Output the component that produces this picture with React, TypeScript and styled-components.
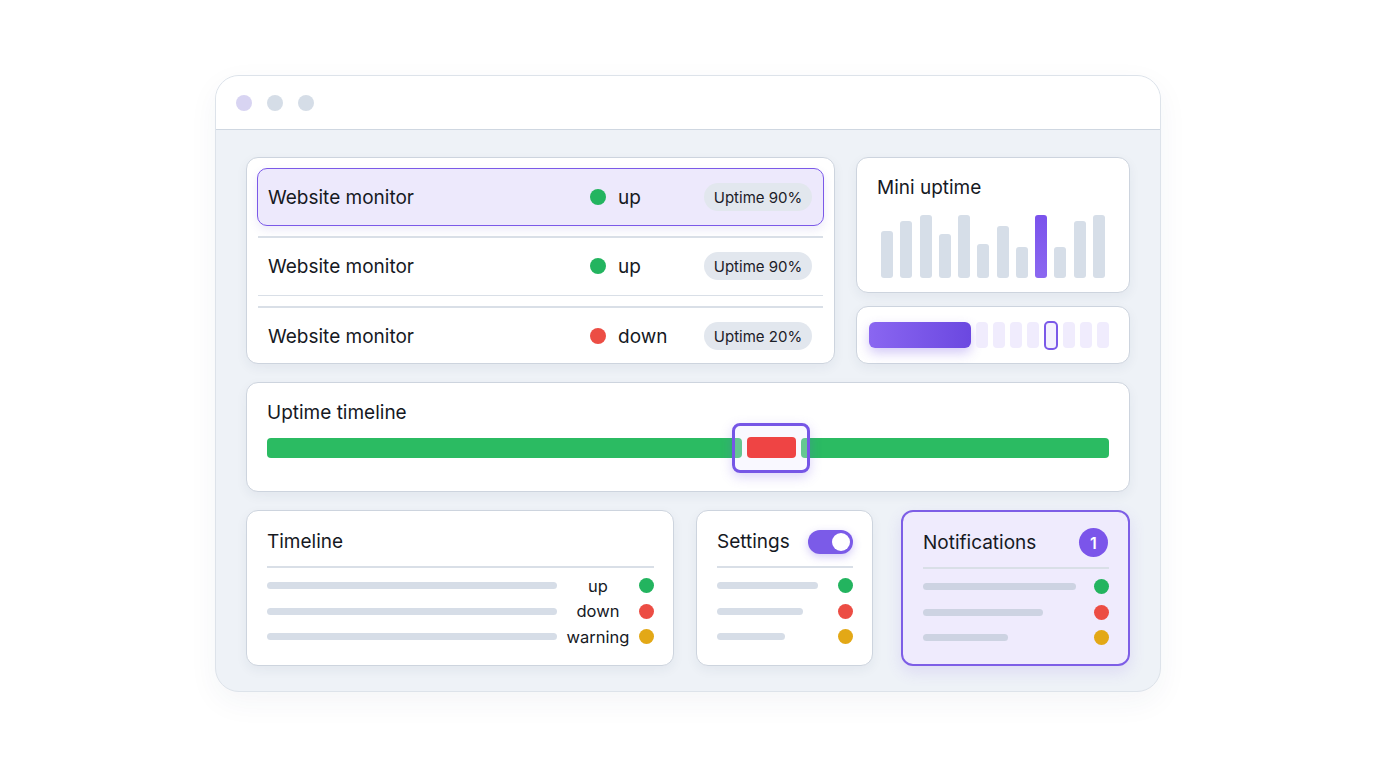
import styled, { createGlobalStyle } from "styled-components";

const GlobalStyle = createGlobalStyle`
    html, body {
        margin: 0;
        padding: 0;
        background: #ffffff;
    }
    body {
        font-family: 'Inter', 'Noto Sans', sans-serif;
        color: #16191f;
    }
`

const purple = '#7b59e8';
const dotColors = {
    up: '#23b45f',
    down: '#ec4d44',
    warning: '#e3a816',
};

type Status = keyof typeof dotColors;

const monitors: { status: Status; label: string; uptime: number; active?: boolean }[] = [
    { status: 'up', label: 'up', uptime: 90, active: true },
    { status: 'up', label: 'up', uptime: 90 },
    { status: 'down', label: 'down', uptime: 20 },
];

const bars = [47, 57, 63, 44, 63, 34, 52, 31, 63, 31, 57, 63];

export default function App() {
    return (
        <>
            <GlobalStyle />
            <Page>
                <Window>
                    <TitleBar>
                        <WinDot $color="#d8d4f2" />
                        <WinDot $color="#d5dde7" />
                        <WinDot $color="#d5dde7" />
                    </TitleBar>
                    <Body>
                        <TopRow>
                            <MonitorCard>
                                {monitors.map((m, i) => (
                                    <div key={i}>
                                        {i === 1 && <Divider $gap={10} />}
                                        {i === 2 && <><Divider /><Divider $gap={10} /></>}
                                        <MonitorRow $active={m.active}>
                                            <MonitorName>Website monitor</MonitorName>
                                            <StatusCell>
                                                <Dot $status={m.status} $size={16} />
                                                {m.label}
                                            </StatusCell>
                                            <Pill>Uptime {m.uptime}%</Pill>
                                        </MonitorRow>
                                    </div>
                                ))}
                            </MonitorCard>
                            <SideColumn>
                                <MiniCard>
                                    <Title>Mini uptime</Title>
                                    <Bars>
                                        {bars.map((h, i) => (
                                            <Bar key={i} $active={i === 8} style={{ height: h }} />
                                        ))}
                                    </Bars>
                                </MiniCard>
                                <SliderCard>
                                    <SliderFill />
                                    <Cell /><Cell /><Cell /><Cell />
                                    <Thumb />
                                    <Cell /><Cell /><Cell />
                                </SliderCard>
                            </SideColumn>
                        </TopRow>

                        <TimelineCard>
                            <Title>Uptime timeline</Title>
                            <Track>
                                <Segment $color="#2bbb62" style={{ width: 475 }} />
                                <Segment $color="#ef4444" $top style={{ width: 49 }} />
                                <Segment $color="#2bbb62" $grow />
                                <Selection />
                            </Track>
                        </TimelineCard>

                        <BottomRow>
                            <SmallCard>
                                <CardHead>
                                    <Title>Timeline</Title>
                                </CardHead>
                                <HeadDivider />
                                <LegendList>
                                    {(['up', 'down', 'warning'] as Status[]).map(s => (
                                        <LegendRow key={s}>
                                            <Line />
                                            <LegendLabel>{s}</LegendLabel>
                                            <Dot $status={s} $size={15} />
                                        </LegendRow>
                                    ))}
                                </LegendList>
                            </SmallCard>

                            <SmallCard>
                                <CardHead>
                                    <Title>Settings</Title>
                                    <Toggle><Knob /></Toggle>
                                </CardHead>
                                <HeadDivider />
                                <LegendList>
                                    {([['up', 101], ['down', 86], ['warning', 68]] as [Status, number][]).map(([s, w]) => (
                                        <LegendRow key={s} $compact>
                                            <Line style={{ width: w }} />
                                            <Dot $status={s} $size={15} />
                                        </LegendRow>
                                    ))}
                                </LegendList>
                            </SmallCard>

                            <SmallCard $highlight>
                                <CardHead>
                                    <Title>Notifications</Title>
                                    <Badge>1</Badge>
                                </CardHead>
                                <HeadDivider />
                                <LegendList>
                                    {([['up', 153], ['down', 120], ['warning', 85]] as [Status, number][]).map(([s, w]) => (
                                        <LegendRow key={s} $compact>
                                            <Line $dark style={{ width: w }} />
                                            <Dot $status={s} $size={15} />
                                        </LegendRow>
                                    ))}
                                </LegendList>
                            </SmallCard>
                        </BottomRow>
                    </Body>
                </Window>
            </Page>
        </>
    )
}

const Page = styled.div`
    width: 1376px;
    height: 768px;
    padding: 75px 0 0 215px;
    box-sizing: border-box;
`

const Window = styled.div`
    width: 946px;
    height: 617px;
    box-sizing: border-box;
    border: 1px solid #dde3ea;
    border-radius: 24px;
    overflow: hidden;
    background: #eef2f7;
    box-shadow: 0 10px 30px rgba(40, 55, 90, 0.05);
    display: flex;
    flex-direction: column;
`

const TitleBar = styled.div`
    height: 53px;
    flex-shrink: 0;
    background: #ffffff;
    border-bottom: 1.5px solid #cfd7e1;
    display: flex;
    align-items: center;
    gap: 15px;
    padding-left: 20px;
`

const WinDot = styled.span<{ $color: string }>`
    width: 16px;
    height: 16px;
    border-radius: 50%;
    background: ${p => p.$color};
`

const Body = styled.div`
    padding: 27px 30px 0 30px;
    display: flex;
    flex-direction: column;
`

const Card = styled.div`
    box-sizing: border-box;
    background: #ffffff;
    border: 1.5px solid #cdd4de;
    border-radius: 12px;
    box-shadow: 0 4px 12px rgba(30, 45, 80, 0.06);
`

const TopRow = styled.div`
    display: grid;
    grid-template-columns: 589px 274px;
    gap: 21px;
`

const MonitorCard = styled(Card)`
    height: 207px;
    padding: 10px 10px 0 10px;
`

const MonitorRow = styled.div<{ $active?: boolean }>`
    height: ${p => p.$active ? 58 : 57}px;
    box-sizing: border-box;
    display: grid;
    grid-template-columns: 1fr 114px 108px;
    align-items: center;
    padding: 0 11px 0 10px;
    border-radius: 10px;
    border: 1.5px solid ${p => p.$active ? purple : 'transparent'};
    background: ${p => p.$active ? '#ede9fc' : 'transparent'};
    box-shadow: ${p => p.$active ? '0 4px 10px rgba(100, 80, 200, 0.12)' : 'none'};
`

const MonitorName = styled.span`
    font-size: 19px;
`

const StatusCell = styled.span`
    display: flex;
    align-items: center;
    gap: 12px;
    font-size: 19px;
`

const Pill = styled.span`
    height: 28px;
    border-radius: 14px;
    background: #e2e7ee;
    display: flex;
    align-items: center;
    justify-content: center;
    font-size: 15px;
    color: #1c2028;
`

const Divider = styled.div<{ $gap?: number }>`
    height: 1.5px;
    background: #d9dfe7;
    margin: ${p => p.$gap ?? 0}px 1px 0 1px;
`

const Dot = styled.span<{ $status: Status; $size: number }>`
    width: ${p => p.$size}px;
    height: ${p => p.$size}px;
    border-radius: 50%;
    flex-shrink: 0;
    background: ${p => dotColors[p.$status]};
`

const SideColumn = styled.div`
    display: flex;
    flex-direction: column;
    gap: 13px;
`

const Title = styled.div`
    font-size: 19px;
    line-height: 22px;
`

const MiniCard = styled(Card)`
    height: 136px;
    padding: 19px 24px 14px 20px;
    display: flex;
    flex-direction: column;
    justify-content: space-between;
`

const Bars = styled.div`
    display: flex;
    align-items: flex-end;
    justify-content: space-between;
    height: 63px;
    padding-left: 4px;
`

const Bar = styled.span<{ $active?: boolean }>`
    width: 12px;
    border-radius: 3px;
    background: ${p => p.$active ? 'linear-gradient(180deg, #7a52ec, #8b68f0)' : '#d6dee8'};
`

const SliderCard = styled(Card)`
    height: 58px;
    padding: 0 12px;
    display: flex;
    align-items: center;
    gap: 5px;
`

const SliderFill = styled.span`
    width: 102px;
    height: 26px;
    border-radius: 6px;
    background: linear-gradient(90deg, #8a66f1, #6b48e0);
    box-shadow: 0 5px 12px rgba(110, 75, 230, 0.3);
`

const Cell = styled.span`
    width: 12px;
    height: 26px;
    border-radius: 4px;
    background: #f0ecfd;
`

const Thumb = styled.span`
    width: 14px;
    height: 29px;
    box-sizing: border-box;
    border: 2px solid ${purple};
    border-radius: 5px;
    background: #f4f1fe;
`

const TimelineCard = styled(Card)`
    margin-top: 18px;
    height: 110px;
    padding: 19px 20px 0 20px;
`

const Track = styled.div`
    position: relative;
    margin-top: 14px;
    display: flex;
    gap: 5px;
    height: 20px;
`

const Segment = styled.span<{ $color: string; $grow?: boolean; $top?: boolean }>`
    height: ${p => p.$top ? 21 : 20}px;
    margin-top: ${p => p.$top ? -1 : 0}px;
    border-radius: 4px;
    background: ${p => p.$color};
    flex: ${p => p.$grow ? 1 : 'none'};
    position: relative;
    z-index: ${p => p.$top ? 2 : 0};
`

const Selection = styled.span`
    position: absolute;
    z-index: 1;
    left: 465px;
    top: -15px;
    width: 78px;
    height: 50px;
    box-sizing: border-box;
    border: 3px solid #7656e6;
    border-radius: 8px;
    background: rgba(236, 231, 255, 0.3);
    box-shadow: 0 4px 12px rgba(110, 80, 230, 0.25);
`

const BottomRow = styled.div`
    margin-top: 18px;
    display: grid;
    grid-template-columns: 428px 177px 1fr;
    gap: 22px;
`

const SmallCard = styled(Card)<{ $highlight?: boolean }>`
    height: 156px;
    padding: 18px 19px 0 20px;
    ${p => p.$highlight && `
        width: 229px;
        justify-self: end;
        border: 2px solid #7d5ee6;
        background: #efebfd;
        box-shadow: 0 6px 16px rgba(110, 80, 230, 0.14);
    `}
`

const CardHead = styled.div`
    height: 25px;
    display: flex;
    align-items: center;
    justify-content: space-between;
`

const HeadDivider = styled.div`
    height: 1.5px;
    background: #d9dfe7;
    margin-top: 12px;
`

const LegendList = styled.div`
    margin-top: 8px;
    display: flex;
    flex-direction: column;
    gap: 5.5px;
`

const LegendRow = styled.div<{ $compact?: boolean }>`
    height: 20px;
    display: grid;
    grid-template-columns: ${p => p.$compact ? '1fr 15px' : '290px 1fr 15px'};
    align-items: center;
    column-gap: 8px;
`

const Line = styled.span<{ $dark?: boolean }>`
    height: 7px;
    border-radius: 4px;
    background: ${p => p.$dark ? '#cdd3e2' : '#d6dde7'};
`

const LegendLabel = styled.span`
    font-size: 16.5px;
    text-align: center;
`

const Toggle = styled.span`
    width: 45px;
    height: 24px;
    box-sizing: border-box;
    border-radius: 12px;
    background: #7b5be8;
    padding: 3px;
    display: flex;
    justify-content: flex-end;
    box-shadow: 0 3px 8px rgba(110, 80, 230, 0.3);
`

const Knob = styled.span`
    width: 18px;
    height: 18px;
    border-radius: 50%;
    background: #ffffff;
`

const Badge = styled.span`
    width: 29px;
    height: 29px;
    border-radius: 50%;
    background: #7b55ea;
    color: #ffffff;
    font-size: 16px;
    font-weight: 600;
    display: flex;
    align-items: center;
    justify-content: center;
    margin-right: 1px;
`
